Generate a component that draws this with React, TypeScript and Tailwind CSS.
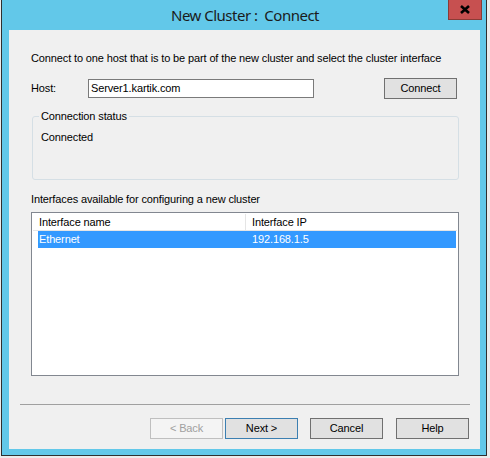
import React from "react";

const font = { fontFamily: '"Liberation Sans", Arial, sans-serif' };

function WinButton({
  label,
  variant = "normal",
}: {
  label: string;
  variant?: "normal" | "default" | "disabled";
}) {
  const cls =
    variant === "disabled"
      ? "border-[#bfbfbf] bg-[#f4f4f4] text-[#a0a0a0]"
      : variant === "default"
        ? "border-[#3c7fb1] bg-[#e1e1e1] text-black"
        : "border-[#707070] bg-[#e1e1e1] text-black";
  return (
    <div
      className={`flex h-[21px] w-[73px] items-center justify-center border text-[11px] ${cls}`}
    >
      {label}
    </div>
  );
}

export default function App() {
  return (
    <div className="h-[458px] w-[490px] overflow-hidden bg-[#ececec] pl-px" style={font}>
      <div className="flex h-[456px] w-[486px] flex-col border-x border-b border-[#2f2f2f] bg-[#62c8e9]">
        {/* Title bar */}
        <div className="relative flex h-[30px] shrink-0 items-center justify-center">
          <span
            className="pl-[2px] text-[15px] tracking-[-0.5px] text-[#1b1b1b]"
            style={{ fontFamily: '"Noto Sans", "Open Sans", sans-serif' }}
          >
            New Cluster :&nbsp; Connect
          </span>
          <div className="absolute right-[4px] top-0 flex h-[20px] w-[34px] items-center justify-center border border-t-0 border-[#8a3b36] bg-[#c75050]">
            <svg width="10" height="9" viewBox="0 0 10 9">
              <path d="M1 1 L9 8 M9 1 L1 8" stroke="#000" strokeWidth="2.6" />
            </svg>
          </div>
        </div>

        {/* Client area */}
        <div className="ml-[7px] flex h-[419px] w-[471px] flex-col bg-[#f0f0f0] text-[11px] tracking-[-0.13px] text-black">
          <div className="ml-[22px] mt-[21px] leading-[14px]">
            Connect to one host that is to be part of the new cluster and select the cluster interface
          </div>

          <div className="mt-[13px] flex h-[21px] items-center">
            <span className="ml-[22px] w-[57px]">Host:</span>
            <div className="flex h-[19px] w-[226px] items-center border border-[#7a7a7a] bg-white pl-[2px]">
              Server1.kartik.com
            </div>
            <div className="ml-[70px]">
              <WinButton label="Connect" />
            </div>
          </div>

          {/* Group box */}
          <div className="relative ml-[23px] mt-[17px] h-[64px] w-[427px] rounded-[3px] border border-[#d5dfe5]">
            <span className="absolute -top-[8px] left-[6px] bg-[#f0f0f0] px-[2px] leading-[14px]">
              Connection status
            </span>
            <div className="ml-[8px] mt-[12px]">Connected</div>
          </div>

          <div className="ml-[22px] mt-[12px] leading-[14px]">
            Interfaces available for configuring a new cluster
          </div>

          {/* List view */}
          <div className="ml-[22px] mt-[6px] h-[164px] w-[428px] border border-[#828790] bg-white p-px">
            <div className="flex h-[17px] items-center border-b border-[#e5e5e5] bg-white">
              <div className="h-full w-[213px] border-r border-[#e5e5e5] pl-[6px] leading-[17px]">
                Interface name
              </div>
              <div className="pl-[6px] leading-[17px]">Interface IP</div>
            </div>
            <div className="ml-[5px] mr-[1px] flex h-[17px] items-center bg-[#3399ff] text-white">
              <div className="w-[214px] pl-[1px]">Ethernet</div>
              <div>192.168.1.5</div>
            </div>
          </div>

          <div className="ml-[11px] mt-[28px] h-px w-[450px] bg-[#a0a0a0]" />

          <div className="ml-[141px] mt-[13px] flex">
            <WinButton label="< Back" variant="disabled" />
            <div className="ml-[2px]">
              <WinButton label="Next >" variant="default" />
            </div>
            <div className="ml-[12px]">
              <WinButton label="Cancel" />
            </div>
            <div className="ml-[13px]">
              <WinButton label="Help" />
            </div>
          </div>
        </div>
      </div>
    </div>
  );
}
